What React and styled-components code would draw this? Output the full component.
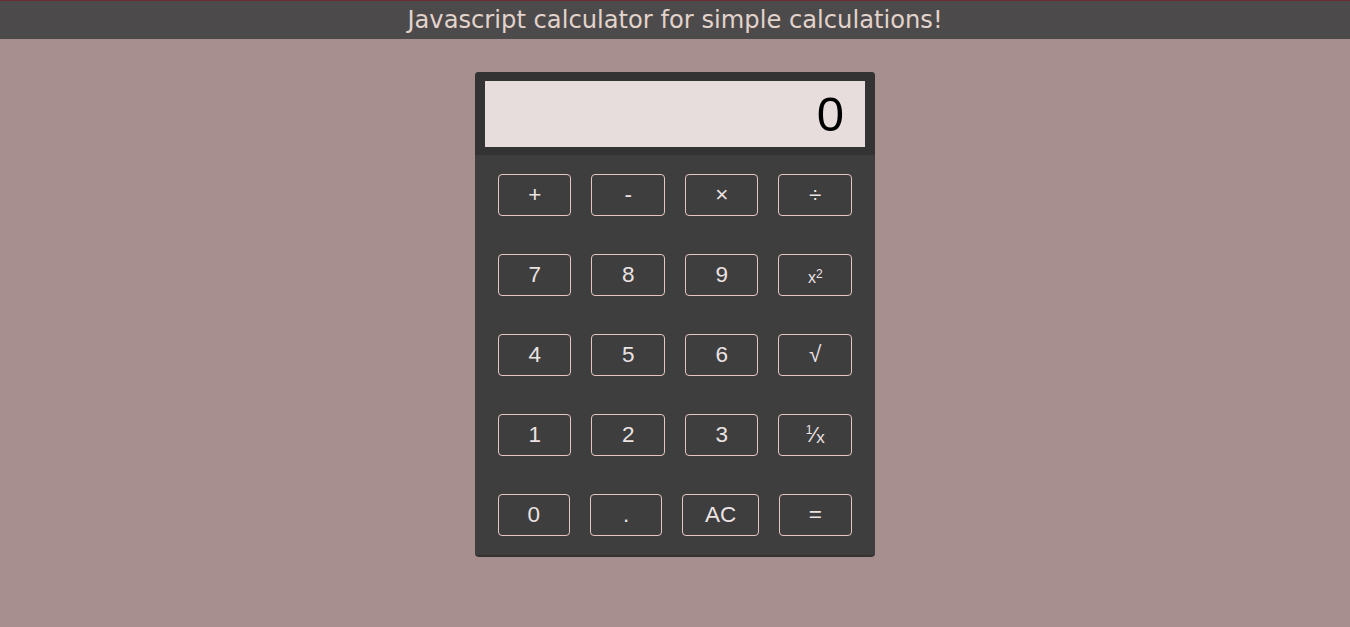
import React from "react";
import styled, { createGlobalStyle } from "styled-components";

const Global = createGlobalStyle`
  html, body { margin: 0; padding: 0; }
  body {
    background: #a68f8e;
    font-family: "Liberation Sans", Arial, sans-serif;
    min-height: 627px;
    overflow: hidden;
  }
`;

const Header = styled.header`
  height: 39px;
  background: #4d4a4b;
  border-top: 1px solid #6c2d31;
  box-sizing: border-box;
  display: flex;
  align-items: center;
  justify-content: center;
  color: #e2d3cc;
  font-family: "DejaVu Sans", sans-serif;
  font-size: 24.2px;
  padding-bottom: 1px;
`;

const Page = styled.main`
  display: flex;
  justify-content: center;
  padding-top: 33px;
`;

const Calc = styled.div`
  width: 400px;
  background: #3e3e3e;
  border-radius: 4px;
  border-bottom: 2px solid #333;
  box-sizing: border-box;
  overflow: hidden;
`;

const Top = styled.div`
  background: #333333;
  padding: 9px 10px 8px;
  height: 83px;
  box-sizing: border-box;
`;

const Display = styled.div`
  height: 66px;
  background: #e8dddd;
  display: flex;
  align-items: center;
  justify-content: flex-end;
  padding-right: 21px;
  font-size: 49px;
  color: #000;
  font-family: "Liberation Sans", Arial, sans-serif;
`;

const Grid = styled.div`
  display: grid;
  grid-template-columns: repeat(4, 1fr);
  grid-auto-rows: 42px;
  row-gap: 38px;
  padding: 19px 13px 19px 13px;
`;

const Cell = styled.div`
  display: flex;
  justify-content: center;
  align-items: flex-start;
`;

const Key = styled.button`
  width: ${(p) => p.$w || 73}px;
  height: 42px;
  background: transparent;
  border: 1px solid #e7c6c2;
  border-radius: 4px;
  color: #ece3e3;
  font-family: "Liberation Sans", Arial, sans-serif;
  font-size: 22.5px;
  padding: 0;
  display: flex;
  align-items: center;
  justify-content: center;
  transform: translateX(${(p) => p.$dx || 0}px);
`;

const Square = styled.span`
  font-size: 16px;
  padding-top: 6px;
  sup { font-size: 12px; vertical-align: 5px; line-height: 0; }
`;

const Inverse = styled.span`
  display: inline-flex;
  align-items: center;
  font-size: 22px;
  sup { font-size: 12px; line-height: 0; vertical-align: 0; position: relative; top: -5px; }
  sub { font-size: 17px; line-height: 0; position: relative; top: 3px; }
`;

const rows = [
  [{ t: "+" }, { t: "-", w: 74 }, { t: "×" }, { t: "÷", w: 74 }],
  [{ t: "7" }, { t: "8", w: 74 }, { t: "9" }, { t: "sq", w: 74 }],
  [{ t: "4" }, { t: "5", w: 74 }, { t: "6" }, { t: "√", w: 74 }],
  [{ t: "1" }, { t: "2", w: 74 }, { t: "3" }, { t: "inv", w: 74 }],
  [{ t: "0", w: 72, dx: -1 }, { t: ".", w: 72, dx: -2 }, { t: "AC", w: 77, dx: -1 }, { t: "=", w: 73, dx: 0 }],
];

function label(t) {
  if (t === "sq")
    return (
      <Square>
        x<sup>2</sup>
      </Square>
    );
  if (t === "inv")
    return (
      <Inverse>
        <sup>1</sup>⁄<sub>x</sub>
      </Inverse>
    );
  return t;
}

export default function App() {
  return (
    <>
      <Global />
      <Header>Javascript calculator for simple calculations!</Header>
      <Page>
        <Calc>
          <Top>
            <Display>0</Display>
          </Top>
          <Grid>
            {rows.flat().map((k, i) => (
              <Cell key={i}>
                <Key $w={k.w} $dx={k.dx}>{label(k.t)}</Key>
              </Cell>
            ))}
          </Grid>
        </Calc>
      </Page>
    </>
  );
}
